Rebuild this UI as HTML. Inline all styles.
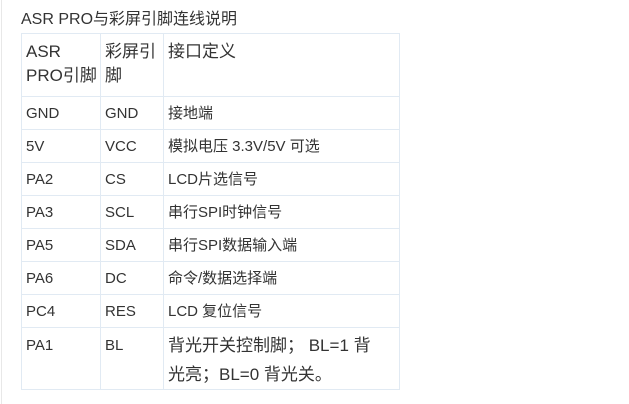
<!DOCTYPE html>
<html><head><meta charset="utf-8"><style>
html,body{margin:0;width:629px;height:404px;background:#fff;overflow:hidden}
body{font-family:"Liberation Sans","Noto Sans CJK SC",sans-serif;color:#333;position:relative}
.vl{position:absolute;left:1px;top:0;width:1px;height:404px;background:#e8e8e8}
.t{position:absolute;left:21px;top:9px;font-size:16px;line-height:22px}
table{position:absolute;left:21px;top:33px;border-collapse:collapse;width:379px;font-size:15px}
td{border:1px solid #e1eaf3;padding:1px 0 0 4px;vertical-align:top;height:31px;line-height:31px}
td.a{width:74px}td.b{width:58px}
tr.h td{font-size:17px;line-height:24px;padding-top:6px;height:56px}
tr.l td{line-height:34px;height:auto}
tr.l td.c{font-size:17px;line-height:29px;padding-top:3px;height:auto}
</style></head><body>
<div class="vl"></div>
<div class="t">ASR PRO与彩屏引脚连线说明</div>
<table>
<tr class="h"><td class="a">ASR<br>PRO引脚</td><td class="b">彩屏引<br>脚</td><td>接口定义</td></tr>
<tr><td class="a">GND</td><td class="b">GND</td><td>接地端</td></tr>
<tr><td class="a">5V</td><td class="b">VCC</td><td>模拟电压 3.3V/5V 可选</td></tr>
<tr><td class="a">PA2</td><td class="b">CS</td><td>LCD片选信号</td></tr>
<tr><td class="a">PA3</td><td class="b">SCL</td><td>串行SPI时钟信号</td></tr>
<tr><td class="a">PA5</td><td class="b">SDA</td><td>串行SPI数据输入端</td></tr>
<tr><td class="a">PA6</td><td class="b">DC</td><td>命令/数据选择端</td></tr>
<tr><td class="a">PC4</td><td class="b">RES</td><td>LCD 复位信号</td></tr>
<tr class="l"><td class="a">PA1</td><td class="b">BL</td><td class="c">背光开关控制脚； BL=1 背<br>光亮；BL=0 背光关。</td></tr>
</table>
</body></html>
